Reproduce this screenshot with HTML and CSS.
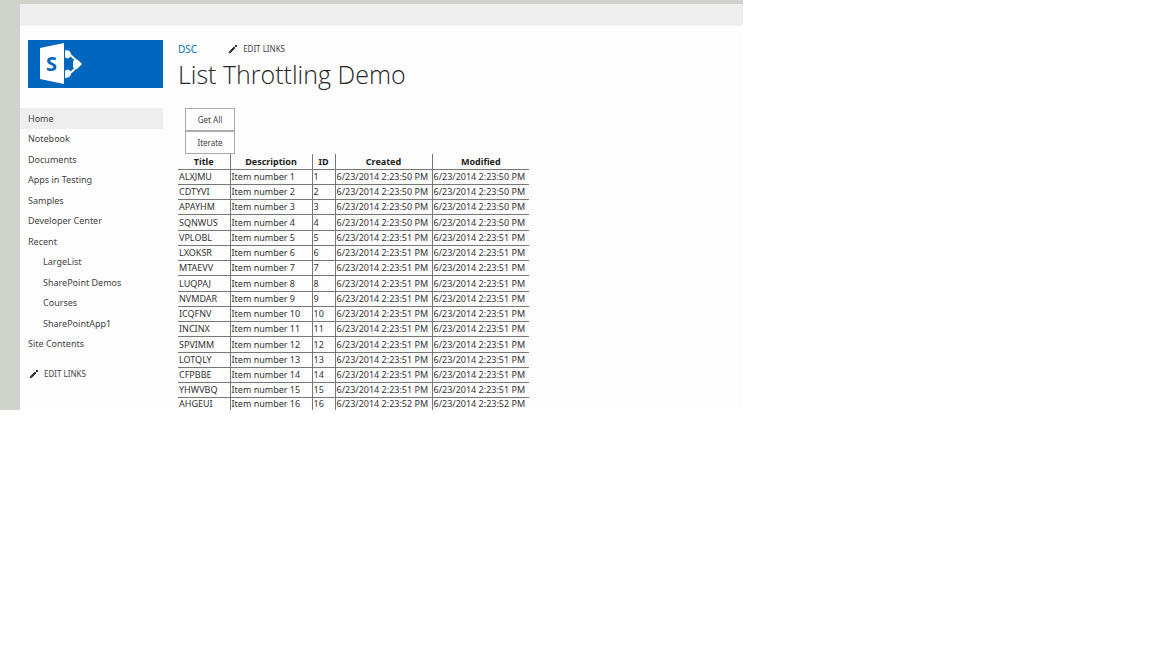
FILE: index.html
```html
<!DOCTYPE html>
<html lang="en">
<head>
<meta charset="utf-8">
<title>List Throttling Demo</title>
<link rel="stylesheet" href="styles.css">
</head>
<body>
<div class="frame">
  <div class="ribbon"></div>
  <div class="layout">
    <aside class="sidebar">
      <a class="logo" href="#" aria-label="SharePoint">
        <svg viewBox="0 0 135 48" width="135" height="48" aria-hidden="true">
          <path d="M40 13 50 22M40 35 50 26" fill="none" stroke="#fff" stroke-width="2"/>
          <g fill="#fff">
            <path d="M12 8 36 3V44L12 39Z"/>
            <path d="M37 10.500q5-1 6 3.500 0 3-3 4.500l-3-1ZM37 30.500l3-1q3 1 3 4 0 4-6 4.500Z"/>
            <path d="M45 21q3-2 5-1l4 4-5 5q-3 0-4-2Z"/>
          </g>
          <text class="logo-letter" x="18" y="31">S</text>
        </svg>
      </a>
      <nav class="side-nav" aria-label="Site">
        <a class="side-link current" href="#">Home</a>
        <a class="side-link" href="#">Notebook</a>
        <a class="side-link" href="#">Documents</a>
        <a class="side-link" href="#">Apps in Testing</a>
        <a class="side-link" href="#">Samples</a>
        <a class="side-link" href="#">Developer Center</a>
        <a class="side-link" href="#">Recent</a>
        <a class="side-link nested" href="#">LargeList</a>
        <a class="side-link nested" href="#">SharePoint Demos</a>
        <a class="side-link nested" href="#">Courses</a>
        <a class="side-link nested" href="#">SharePointApp1</a>
        <a class="side-link" href="#">Site Contents</a>
      </nav>
      <a class="edit-links" href="#">
        <svg class="pencil" viewBox="0 0 10 10" width="10" height="10" aria-hidden="true"><path d="M1 9 2 7 6 3 7 4 3 8ZM7 2 8 1 9 2 8 3Z"/></svg>
        EDIT LINKS
      </a>
    </aside>
    <main class="content">
      <div class="top-links">
        <a class="site-link" href="#">DSC</a>
        <a class="edit-links" href="#">
          <svg class="pencil" viewBox="0 0 10 10" width="10" height="10" aria-hidden="true"><path d="M1 9 2 7 6 3 7 4 3 8ZM7 2 8 1 9 2 8 3Z"/></svg>
          EDIT LINKS
        </a>
      </div>
      <h1 class="title">List Throttling Demo</h1>
      <div class="actions">
        <button class="action" type="button">Get All</button>
        <button class="action" type="button">Iterate</button>
      </div>
      <table class="items">
        <colgroup><col class="col-title"><col class="col-desc"><col class="col-id"><col class="col-date"><col class="col-date"></colgroup>
        <thead>
          <tr><th>Title</th><th>Description</th><th>ID</th><th>Created</th><th>Modified</th></tr>
        </thead>
        <tbody>
          <tr><td>ALXJMU</td><td>Item number 1</td><td>1</td><td>6/23/2014 2:23:50 PM</td><td>6/23/2014 2:23:50 PM</td></tr>
          <tr><td>CDTYVI</td><td>Item number 2</td><td>2</td><td>6/23/2014 2:23:50 PM</td><td>6/23/2014 2:23:50 PM</td></tr>
          <tr><td>APAYHM</td><td>Item number 3</td><td>3</td><td>6/23/2014 2:23:50 PM</td><td>6/23/2014 2:23:50 PM</td></tr>
          <tr><td>SQNWUS</td><td>Item number 4</td><td>4</td><td>6/23/2014 2:23:50 PM</td><td>6/23/2014 2:23:50 PM</td></tr>
          <tr><td>VPLOBL</td><td>Item number 5</td><td>5</td><td>6/23/2014 2:23:51 PM</td><td>6/23/2014 2:23:51 PM</td></tr>
          <tr><td>LXOKSR</td><td>Item number 6</td><td>6</td><td>6/23/2014 2:23:51 PM</td><td>6/23/2014 2:23:51 PM</td></tr>
          <tr><td>MTAEVV</td><td>Item number 7</td><td>7</td><td>6/23/2014 2:23:51 PM</td><td>6/23/2014 2:23:51 PM</td></tr>
          <tr><td>LUQPAJ</td><td>Item number 8</td><td>8</td><td>6/23/2014 2:23:51 PM</td><td>6/23/2014 2:23:51 PM</td></tr>
          <tr><td>NVMDAR</td><td>Item number 9</td><td>9</td><td>6/23/2014 2:23:51 PM</td><td>6/23/2014 2:23:51 PM</td></tr>
          <tr><td>ICQFNV</td><td>Item number 10</td><td>10</td><td>6/23/2014 2:23:51 PM</td><td>6/23/2014 2:23:51 PM</td></tr>
          <tr><td>INCINX</td><td>Item number 11</td><td>11</td><td>6/23/2014 2:23:51 PM</td><td>6/23/2014 2:23:51 PM</td></tr>
          <tr><td>SPVIMM</td><td>Item number 12</td><td>12</td><td>6/23/2014 2:23:51 PM</td><td>6/23/2014 2:23:51 PM</td></tr>
          <tr><td>LOTQLY</td><td>Item number 13</td><td>13</td><td>6/23/2014 2:23:51 PM</td><td>6/23/2014 2:23:51 PM</td></tr>
          <tr><td>CFPBBE</td><td>Item number 14</td><td>14</td><td>6/23/2014 2:23:51 PM</td><td>6/23/2014 2:23:51 PM</td></tr>
          <tr><td>YHWVBQ</td><td>Item number 15</td><td>15</td><td>6/23/2014 2:23:51 PM</td><td>6/23/2014 2:23:51 PM</td></tr>
          <tr><td>AHGEUI</td><td>Item number 16</td><td>16</td><td>6/23/2014 2:23:52 PM</td><td>6/23/2014 2:23:52 PM</td></tr>
        </tbody>
      </table>
    </main>
  </div>
</div>
</body>
</html>
```

FILE: styles.css
```css
* {
  box-sizing: border-box;
}

body {
  margin: 0;
  background: #fff;
  color: #444;
  font: 9px/12px "Noto Sans", "Open Sans", sans-serif;
}

a {
  color: inherit;
  text-decoration: none;
}

.frame {
  width: 64.5%;
  min-width: 560px;
  border-top: 4px solid #d0d3cb;
  border-left: 20px solid #d0d3cb;
  background: #fdfdfd;
}

.ribbon {
  height: 22px;
  background: #eee;
  border-bottom: 1px solid #f3f3f3;
}

.layout {
  display: flex;
  gap: 15px;
}

.sidebar {
  flex: none;
  width: 143px;
  padding-top: 14px;
}

.logo {
  display: block;
  height: 48px;
  margin-left: 8px;
  background: #0067be;
}

.logo svg {
  display: block;
}

.logo-letter {
  fill: #0067be;
  font: bold 20px "Noto Sans", sans-serif;
}

.side-nav {
  display: flex;
  flex-direction: column;
  min-height: 246px;
  margin: 20px 0 14px;
}

.side-link {
  display: flex;
  flex: 1;
  align-items: center;
  padding: 1px 0 0 8px;
}

.side-link.nested {
  padding-left: 23px;
}

.side-link.current {
  background: #eee;
}

.edit-links {
  display: flex;
  align-items: center;
  gap: 5px;
  font-size: 8px;
}

.sidebar .edit-links {
  padding-left: 9px;
}

.pencil {
  fill: #333;
  stroke: #333;
  stroke-width: 1px;
}

.content {
  flex: 1;
  padding-top: 17px;
}

.top-links {
  display: flex;
  gap: 31px;
}

.site-link {
  color: #0072b8;
  font-size: 10px;
}

.title {
  margin: 0;
  color: #262626;
  font: 300 25px/38px "Open Sans", sans-serif;
}

.actions {
  display: flex;
  flex-direction: column;
  align-items: flex-start;
  padding: 15px 0 0 7px;
}

.action {
  width: 50px;
  height: 23px;
  padding: 0;
  border: 1px solid #ababab;
  background: #fdfdfd;
  color: #444;
  font: 8px/12px "Noto Sans", sans-serif;
}

.items {
  width: 350px;
  table-layout: fixed;
  border-collapse: collapse;
  color: #333;
}

.items th,
.items td {
  height: 15px;
  padding: 1px 1px 0;
  border: 1px solid #777;
  line-height: 12px;
  white-space: nowrap;
}

.items td {
  text-align: left;
}

.items th {
  border-top: 0;
  color: #222;
}

.items tr:nth-child(4n) > td {
  height: 16px;
}

.items tr > :first-child {
  border-left: 0;
}

.items tr > :last-child {
  border-right: 0;
}

.items tr:last-child > td {
  height: 12px;
  padding-top: 0;
  border-bottom: 0;
}

.col-title {
  width: 52px;
}

.col-desc {
  width: 82px;
}

.col-id {
  width: 23px;
}

.col-date {
  width: 97px;
}
```
